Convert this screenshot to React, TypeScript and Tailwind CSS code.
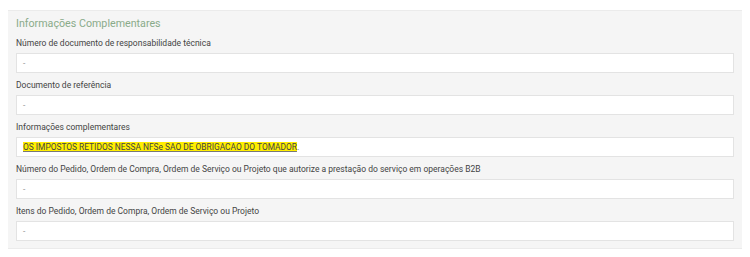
const fields = [
  { label: "Número de documento de responsabilidade técnica", value: "-" },
  { label: "Documento de referência", value: "-" },
  {
    label: "Informações complementares",
    value: "OS IMPOSTOS RETIDOS NESSA NFSe SAO DE OBRIGACAO DO TOMADOR.",
    highlight: true,
  },
  {
    label:
      "Número do Pedido, Ordem de Compra, Ordem de Serviço ou Projeto que autorize a prestação do serviço em operações B2B",
    value: "-",
  },
  { label: "Itens do Pedido, Ordem de Compra, Ordem de Serviço ou Projeto", value: "-" },
];

const App = () => {
  return (
    <div className="h-screen bg-white pt-[10px] pl-[8px] font-['Roboto',sans-serif]">
      <div className="w-[734px] bg-[#f5f5f5] border-t border-b border-[#ebebeb] px-[8px] pt-[5px] pb-[7px]">
        <h3 className="text-[10.7px] leading-[16px] text-[#8aab8a] mb-[5px]">Informações Complementares</h3>
        <div className="flex flex-col gap-[6px]">
          {fields.map((f) => (
            <div key={f.label}>
              <div className="text-[8.5px] leading-[12px] text-[#444] mb-[4px]">{f.label}</div>
              <div className="h-[20px] bg-white border border-[#e3e3e3] flex items-center pl-[6px] text-[8.4px]">
                {f.highlight ? (
                  <span className="text-[#444]">
                    <span className="bg-[#ffee00] underline decoration-[#777]">
                      OS IMPOSTOS RETIDOS NESSA NFSe SAO DE OBRIGACAO DO TOMADOR
                    </span>
                    .
                  </span>
                ) : (
                  <span className="text-[#999]">{f.value}</span>
                )}
              </div>
            </div>
          ))}
        </div>
      </div>
    </div>
  );
};

export default App;
